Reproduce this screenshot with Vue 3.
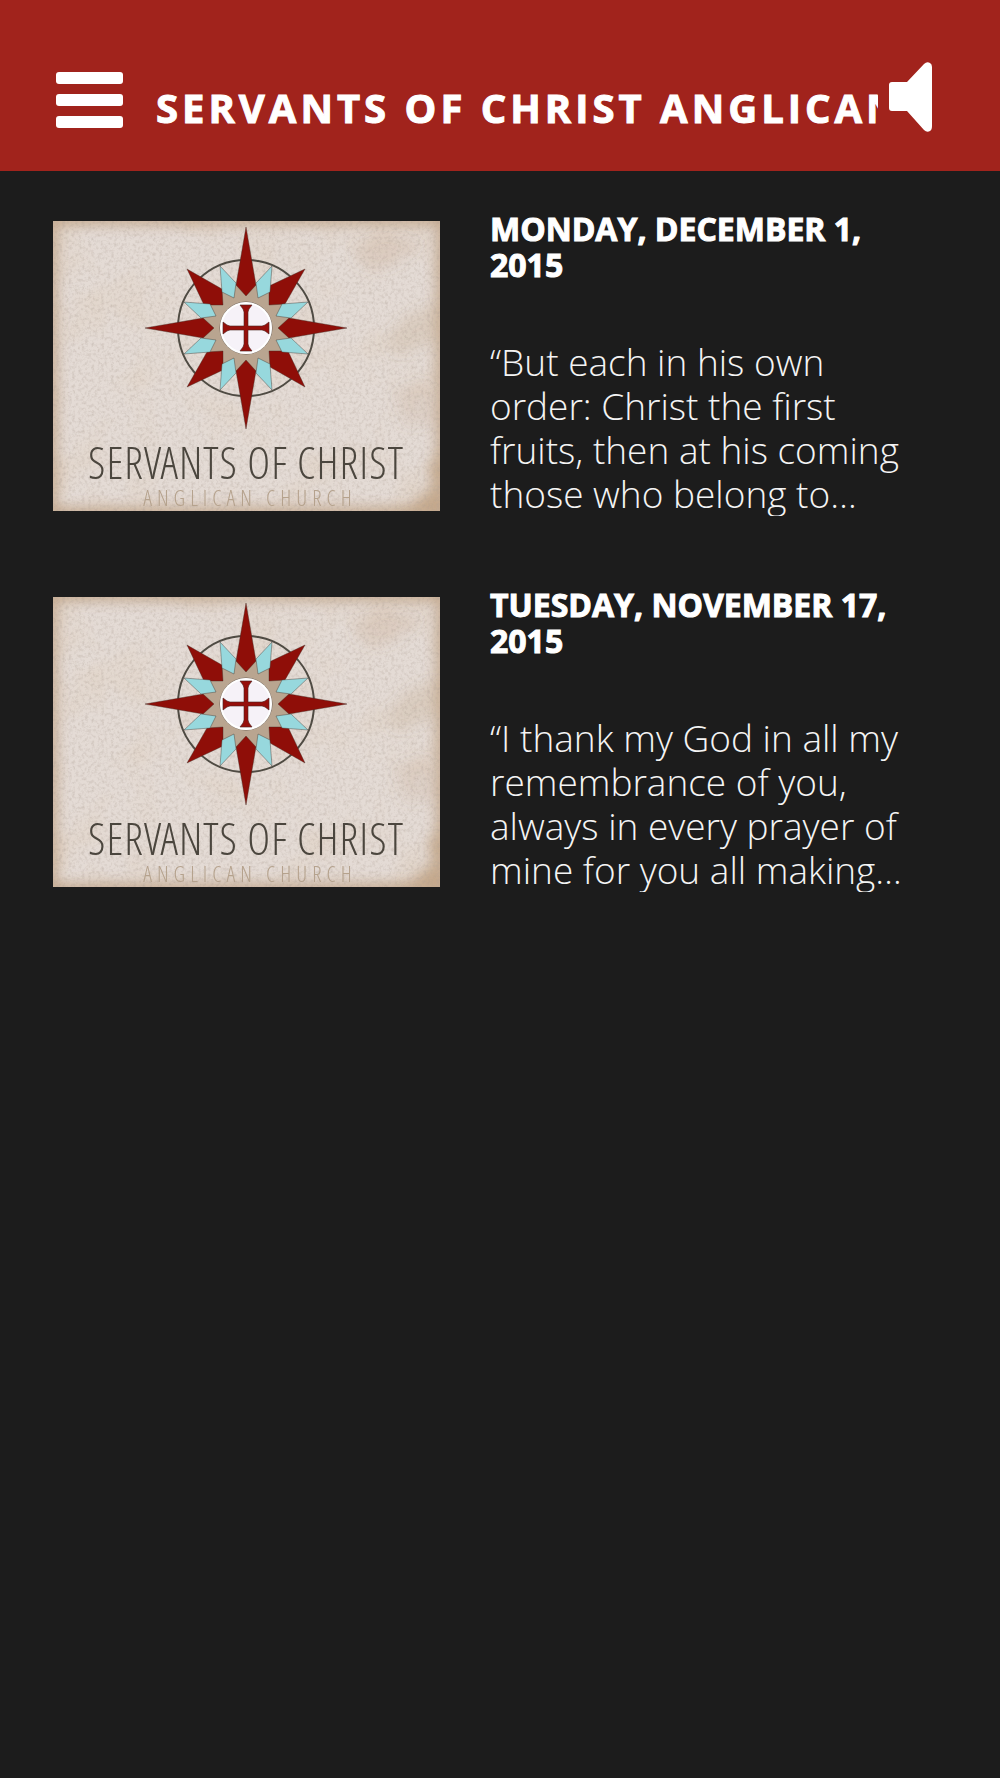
<script setup>
const entries = [
  {
    id: 1,
    date: 'Monday, December 1, 2015',
    excerpt: '“But each in his own order: Christ the first fruits, then at his coming those who belong to…',
  },
  {
    id: 2,
    date: 'Tuesday, November 17, 2015',
    excerpt: '“I thank my God in all my remembrance of you, always in every prayer of mine for you all making…',
  },
]
const quarters = [0, 90, 180, 270]
</script>

<template>
  <div class="app">
    <header class="bar">
      <button class="icon-button menu" type="button" aria-label="Menu">
        <span class="line"></span>
        <span class="line"></span>
        <span class="line"></span>
      </button>
      <h1 class="title">Servants of Christ Anglican</h1>
      <button class="icon-button sound" type="button" aria-label="Sound">
        <svg width="44" height="70" viewBox="0 0 44 70" aria-hidden="true">
          <path
            d="M4 20H19L36 2Q39 -1 42 1Q44 2 44 5V64Q44 68 42 69Q39 71 36 68L19 49H4Q1 49 1 46V23Q1 20 4 20Z"
            fill="#fff"
          />
        </svg>
      </button>
    </header>

    <main class="list">
      <article v-for="entry in entries" :key="entry.id" class="entry">
        <svg class="cover" viewBox="0 0 387 290" role="img" aria-label="Servants of Christ Anglican Church">
          <defs>
            <filter :id="`grain-${entry.id}`" x="0" y="0" width="100%" height="100%">
              <feTurbulence type="fractalNoise" baseFrequency="0.31" numOctaves="4" seed="4" />
              <feColorMatrix values="0 0 0 0 0.42  0 0 0 0 0.35  0 0 0 0 0.3  1.4 0 0 0 -0.62" />
            </filter>
            <filter :id="`stain-${entry.id}`" x="0" y="0" width="100%" height="100%">
              <feTurbulence type="fractalNoise" baseFrequency="0.018" numOctaves="3" seed="11" />
              <feColorMatrix values="0 0 0 0 0.72  0 0 0 0 0.58  0 0 0 0 0.44  1.8 0 0 0 -0.88" />
            </filter>
            <filter :id="`soft-${entry.id}`" x="-10%" y="-10%" width="120%" height="120%">
              <feGaussianBlur stdDeviation="7" />
            </filter>
            <clipPath :id="`frame-${entry.id}`"><rect width="387" height="290" /></clipPath>
          </defs>
          <g :clip-path="`url(#frame-${entry.id})`">
            <rect width="387" height="290" fill="#e4dbd5" />
            <rect width="387" height="290" :filter="`url(#stain-${entry.id})`" opacity="0.4" />
            <rect
              x="-3" y="-3" width="393" height="296" fill="none" stroke="#b4906c" stroke-width="12"
              opacity="0.75" :filter="`url(#soft-${entry.id})`"
            />
            <g fill="#b38a60" :filter="`url(#soft-${entry.id})`">
              <path d="M387 235L374 250L383 262L362 282L350 290H387Z" opacity="0.6" />
              <path d="M300 28L330 12L370 22L345 42L325 50L306 44Z" opacity="0.16" />
              <path d="M387 80L352 96L330 120L346 134L387 118Z" opacity="0.18" />
              <path d="M340 170L375 160L387 200L352 206Z" opacity="0.14" />
            </g>
            <rect width="387" height="290" :filter="`url(#grain-${entry.id})`" opacity="0.6" />
          </g>

          <g transform="translate(193 107)">
            <circle r="68" fill="none" stroke="#4f4b43" stroke-width="2" />
            <path
              d="M10 -43L23 -40L40 -23L43 -10V10L40 23L23 40L10 43H-10L-23 40L-40 23L-43 10V-10L-40 -23L-23 -40L-10 -43Z"
              fill="#b9a590"
            />
            <g stroke="#3c2a24" stroke-width="0.4" stroke-linejoin="round">
              <path
                v-for="turn in quarters" :key="`red-${turn}`" :transform="`rotate(${turn})`"
                d="M0 -101L10 -43L0 -32L-10 -43Z M59 -59L23 -42L23 -23L39 -24Z" fill="#8f0e08"
              />
              <path
                v-for="turn in quarters" :key="`blue-${turn}`" :transform="`rotate(${turn})`"
                d="M-26 -62L-10 -45L-12 -30L-24 -36Z M26 -62L10 -45L12 -30L24 -36Z" fill="#97d8dd"
              />
            </g>
            <circle r="26" fill="#f6f2f8" stroke="#5a5048" stroke-width="0.8" />
            <circle r="25" fill="none" stroke="#fff" stroke-width="2" />
            <path
              d="M-6 -23H6L3 -19L2 -16V-2H16L19 -3L23 -6V6L19 3L16 2H2V16L3 19L6 23H-6L-3 19L-2 16V2H-16L-19 3L-23 6V-6L-19 -3L-16 -2H-2V-16L-3 -19Z"
              fill="#960f0b" stroke="#4a2520" stroke-width="0.6"
            />
          </g>

          <text class="cover-name" x="193" y="258" text-anchor="middle">SERVANTS OF CHRIST</text>
          <text class="cover-sub" x="197" y="285" text-anchor="middle">ANGLICAN CHURCH</text>
        </svg>

        <div class="copy">
          <h2 class="date">{{ entry.date }}</h2>
          <p class="excerpt">{{ entry.excerpt }}</p>
        </div>
      </article>
    </main>
  </div>
</template>

<style>
body {
  margin: 0;
  background: #1c1c1c;
}
</style>

<style scoped>
.app {
  min-height: 100vh;
  background: #1c1c1c;
  color: #fff;
  font-family: "Open Sans", sans-serif;
}

.bar {
  box-sizing: border-box;
  display: flex;
  align-items: flex-start;
  min-height: 171px;
  padding: 62px 68px 0 56px;
  background: #a1231c;
}

.icon-button {
  flex: none;
  display: flex;
  padding: 0;
  border: 0;
  background: none;
  cursor: pointer;
}

.menu {
  flex-direction: column;
  justify-content: center;
  gap: 10px;
  width: 67px;
  height: 76px;
}

.line {
  height: 12px;
  border-radius: 3px;
  background: #fff;
}

.title {
  flex: 1;
  min-width: 0;
  margin: 0 10px 0 33px;
  overflow: hidden;
  font-size: 40px;
  font-weight: 700;
  line-height: 92px;
  letter-spacing: 4px;
  text-transform: uppercase;
  white-space: nowrap;
  -webkit-text-stroke: 1px #fff;
}

.list {
  display: flex;
  flex-direction: column;
  gap: 71px;
  padding: 40px 80px 40px 53px;
}

.entry {
  display: grid;
  grid-template-columns: 387fr 430fr;
  align-items: start;
  gap: 50px;
}

.cover {
  display: block;
  width: 100%;
  margin-top: 10px;
}

.cover-name,
.cover-sub {
  font-family: "Open Sans Condensed Light", "Open Sans Condensed", "Roboto Condensed", "Liberation Sans Narrow", "Open Sans", sans-serif;
  font-weight: 300;
}

.cover-name {
  fill: #4b463e;
  font-size: 44px;
  letter-spacing: 1px;
}

.cover-sub {
  fill: #b5a28d;
  font-size: 22px;
  letter-spacing: 5px;
}

.date {
  margin: 0 0 57px;
  font-size: 32px;
  font-weight: 700;
  line-height: 36px;
  text-transform: uppercase;
  -webkit-text-stroke: 1px #fff;
}

.excerpt {
  max-height: 176px;
  margin: 0;
  overflow: hidden;
  color: #f4f4f4;
  font-size: 37px;
  font-weight: 300;
  line-height: 44px;
}
</style>
